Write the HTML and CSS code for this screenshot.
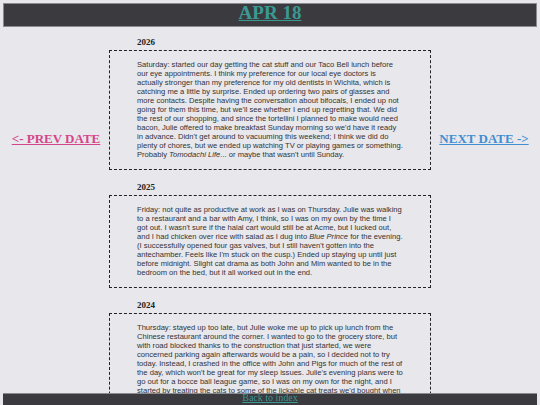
FILE: index.html
```html
<!DOCTYPE html>
<html lang="en">
<head>
<meta charset="utf-8">
<title>Apr 18</title>
<link rel="stylesheet" href="styles.css">
</head>
<body>
<header class="topbar">
  <h1 class="title"><a href="#">APR 18</a></h1>
</header>
<main class="layout">
  <nav class="side side-left"><a class="prev" href="#">&lt;- PREV DATE</a></nav>
  <div class="entries">
    <section class="entry">
      <h2 class="year">2026</h2>
      <div class="box">Saturday: started our day getting the cat stuff and our Taco Bell lunch before our eye appointments. I think my preference for our local eye doctors is actually stronger than my preference for my old dentists in Wichita, which is catching me a little by surprise. Ended up ordering two pairs of glasses and more contacts. Despite having the conversation about bifocals, I ended up not going for them this time, but we'll see whether I end up regretting that. We did the rest of our shopping, and since the tortellini I planned to make would need bacon, Julie offered to make breakfast Sunday morning so we'd have it ready in advance. Didn't get around to vacuuming this weekend; I think we did do plenty of chores, but we ended up watching TV or playing games or something. Probably <em>Tomodachi Life</em>... or maybe that wasn't until Sunday.</div>
    </section>
    <section class="entry">
      <h2 class="year">2025</h2>
      <div class="box">Friday: not quite as productive at work as I was on Thursday. Julie was walking to a restaurant and a bar with Amy, I think, so I was on my own by the time I got out. I wasn't sure if the halal cart would still be at Acme, but I lucked out, and I had chicken over rice with salad as I dug into <em>Blue Prince</em> for the evening. (I successfully opened four gas valves, but I still haven't gotten into the antechamber. Feels like I'm stuck on the cusp.) Ended up staying up until just before midnight. Slight cat drama as both John and Mim wanted to be in the bedroom on the bed, but it all worked out in the end.</div>
    </section>
    <section class="entry">
      <h2 class="year">2024</h2>
      <div class="box">Thursday: stayed up too late, but Julie woke me up to pick up lunch from the Chinese restaurant around the corner. I wanted to go to the grocery store, but with road blocked thanks to the construction that just started, we were concerned parking again afterwards would be a pain, so I decided not to try today. Instead, I crashed in the office with John and Pigs for much of the rest of the day, which won't be great for my sleep issues. Julie's evening plans were to go out for a bocce ball league game, so I was on my own for the night, and I started by treating the cats to some of the lickable cat treats we'd bought when we were out. After that I settled in with some games and went to bed at a reasonable hour for once.</div>
    </section>
  </div>
  <nav class="side side-right"><a class="next" href="#">NEXT DATE -&gt;</a></nav>
</main>
<footer class="bottombar">
  <a class="back" href="#">Back to index</a>
</footer>
</body>
</html>
```

FILE: styles.css
```css
html, body {
  background: #e8e7ec;
}
body {
  margin: 3px;
  font-family: "Liberation Serif", "Times New Roman", serif;
  color: #222;
}
.topbar {
  background: #3b3a3f;
  border: 1px solid #8b8a90;
}
.title {
  margin: 0;
  padding-bottom: 4px;
  font-size: 19px;
  line-height: 18px;
  font-weight: bold;
  text-align: center;
}
.title a {
  color: #3a9a92;
  text-decoration: underline;
}
.layout {
  display: grid;
  grid-template-columns: 1fr 322px 1fr;
  padding-top: 10px;
  padding-bottom: 40px;
}
.side {
  text-align: center;
  padding-top: 94px;
  font-size: 13px;
  line-height: 15px;
  font-weight: bold;
}
.prev {
  color: #d5458a;
}
.next {
  color: #3f8fd2;
}
.entries {
  display: flex;
  flex-direction: column;
  gap: 12px;
}
.year {
  margin: 0 0 3px;
  padding-left: 28px;
  font-size: 9px;
  line-height: 10px;
  font-weight: bold;
  color: #222;
}
.box {
  border: 1px dashed #222;
  padding: 8.5px 27px 10.5px;
  font-family: "Liberation Sans", Arial, sans-serif;
  font-size: 7.6px;
  line-height: 9px;
  color: #333;
}
.bottombar {
  position: fixed;
  left: 3px;
  right: 3px;
  bottom: 0;
  height: 11px;
  background: #3b3a3f;
  border-top: 1px solid #8b8a90;
  text-align: center;
  font-size: 10px;
  line-height: 8px;
}
.back {
  color: #3a9a92;
}
```
